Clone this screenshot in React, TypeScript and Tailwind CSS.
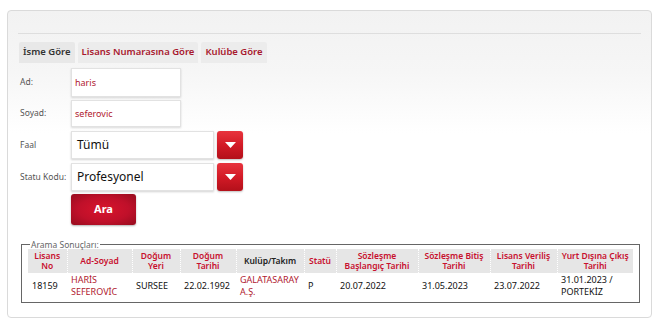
import React from "react";

const th = "border-r border-dotted border-white px-[1px] text-center align-middle font-semibold leading-[10px] text-[#c8102e]";
const td = "px-[4px] align-middle leading-[12px]";

function Dropdown({ value }: { value: string }) {
  return (
    <div className="flex items-center gap-[3px]">
      <div className="flex h-[28px] w-[143px] items-center border border-[#e2e2e2] bg-white pl-[5px] text-[12px] text-[#111] shadow-[0_1px_2px_rgba(0,0,0,0.18)]">
        {value}
      </div>
      <div className="flex h-[28px] w-[26px] items-center justify-center rounded-[3px] bg-gradient-to-b from-[#e8333d] via-[#d31a26] to-[#b3101a] shadow-[0_1px_2px_rgba(0,0,0,0.25)]">
        <svg width="11" height="6" viewBox="0 0 11 6"><path d="M0 0h11L5.5 6z" fill="#fff" /></svg>
      </div>
    </div>
  );
}

export default function App() {
  return (
    <div className="h-[324px] w-[658px] bg-white pl-[7px] pt-[10px]" style={{ fontFamily: '"Noto Sans", "Open Sans", sans-serif' }}>
      <div className="h-[308px] w-[645px] rounded-[4px] border border-[#dadada] bg-gradient-to-b from-[#f2f2f2] via-[#f6f6f6] via-20% to-white to-40%">
        <div className="mx-[10px] h-[23px] border-b border-[#dedede]" />
        <div className="px-[11px]">
          <div className="mt-[8px] flex h-[21px] gap-[3px] text-[9.5px] font-semibold">
            <div className="flex items-center rounded-t-[2px] bg-[#e8e8e8] px-[4px] text-[#333]">İsme Göre</div>
            <div className="flex items-center rounded-t-[2px] bg-[#ececec] px-[4px] text-[#a8182e]">Lisans Numarasına Göre</div>
            <div className="flex items-center rounded-t-[2px] bg-[#ececec] px-[4px] text-[#a8182e]">Kulübe Göre</div>
          </div>
          <div className="mt-[5px] flex flex-col gap-[3px] text-[8.5px] text-[#555]">
            <div className="flex items-center">
              <div className="w-[52px] pl-[1px]">Ad:</div>
              <div className="flex h-[29px] w-[110px] items-center border border-[#e2e2e2] bg-white pl-[3px] text-[9px] text-[#b0182e] shadow-[0_1px_2px_rgba(0,0,0,0.15)]">haris</div>
            </div>
            <div className="flex items-center">
              <div className="w-[52px] pl-[1px]">Soyad:</div>
              <div className="flex h-[27px] w-[110px] items-center border border-[#e2e2e2] bg-white pl-[3px] text-[9px] text-[#b0182e] shadow-[0_1px_2px_rgba(0,0,0,0.15)]">seferovic</div>
            </div>
            <div className="mt-[1px] flex items-center">
              <div className="w-[52px] pl-[1px]">Faal</div>
              <Dropdown value="Tümü" />
            </div>
            <div className="mt-[1px] flex items-center">
              <div className="w-[52px] pl-[1px]">Statu Kodu:</div>
              <Dropdown value="Profesyonel" />
            </div>
            <div className="flex">
              <div className="w-[52px]" />
              <div className="flex h-[31px] w-[65px] items-center justify-center rounded-[3px] bg-[radial-gradient(ellipse_at_center,#d8142c_0%,#c0102a_55%,#960c1e_100%)] text-[11px] font-bold text-white shadow-[0_1px_2px_rgba(0,0,0,0.3)]">Ara</div>
            </div>
          </div>
          <fieldset className="mt-[15px] ml-[2px] w-[619px] border border-[#666] px-[6px] pb-[4px]">
            <legend className="ml-[2px] px-[1px] text-[8.5px] leading-[9px] text-[#666]">Arama Sonuçları:</legend>
            <table className="w-[605px] table-fixed border-collapse text-[8.5px]">
              <colgroup>
                <col className="w-[39px]" />
                <col className="w-[65px]" />
                <col className="w-[48px]" />
                <col className="w-[56px]" />
                <col className="w-[68px]" />
                <col className="w-[32px]" />
                <col className="w-[82px]" />
                <col className="w-[72px]" />
                <col className="w-[67px]" />
                <col className="w-[76px]" />
              </colgroup>
              <thead>
                <tr className="h-[24px] bg-[#e6e6e6]">
                  <th className={th}>Lisans<br />No</th>
                  <th className={th}>Ad-Soyad</th>
                  <th className={th}>Doğum<br />Yeri</th>
                  <th className={th}>Doğum<br />Tarihi</th>
                  <th className={th + " !text-[#222]"}>Kulüp/Takım</th>
                  <th className={th}>Statü</th>
                  <th className={th}>Sözleşme<br />Başlangıç Tarihi</th>
                  <th className={th}>Sözleşme Bitiş<br />Tarihi</th>
                  <th className={th}>Lisans Veriliş<br />Tarihi</th>
                  <th className={th + " border-r-0"}>Yurt Dışına Çıkış<br />Tarihi</th>
                </tr>
              </thead>
              <tbody>
                <tr className="h-[25px] text-[9px] text-[#111]">
                  <td className={td}>18159</td>
                  <td className={td + " text-[#b0182e]"}>HARİS<br />SEFEROVİC</td>
                  <td className={td}>SURSEE</td>
                  <td className={td}>22.02.1992</td>
                  <td className={td + " text-[#b0182e]"}>GALATASARAY<br />A.Ş.</td>
                  <td className={td}>P</td>
                  <td className={td}>20.07.2022</td>
                  <td className={td}>31.05.2023</td>
                  <td className={td}>23.07.2022</td>
                  <td className={td}>31.01.2023 /<br />PORTEKİZ</td>
                </tr>
              </tbody>
            </table>
          </fieldset>
        </div>
      </div>
    </div>
  );
}
